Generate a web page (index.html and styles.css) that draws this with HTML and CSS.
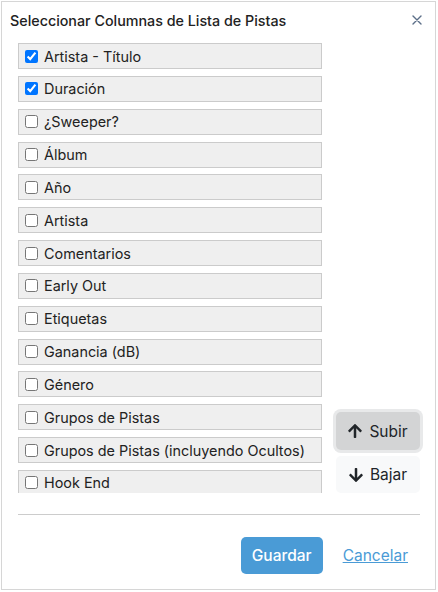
FILE: index.html
```html
<!DOCTYPE html>
<html lang="es">
<head>
<meta charset="utf-8">
<title>Seleccionar Columnas de Lista de Pistas</title>
<link rel="stylesheet" href="styles.css">
</head>
<body>
<div class="modal">
  <div class="modal-header">
    <h2 class="modal-title">Seleccionar Columnas de Lista de Pistas</h2>
    <button class="close" type="button" aria-label="Cerrar">
      <svg viewBox="0 0 10 10" width="10" height="10"><path d="M1 1L9 9M9 1L1 9" stroke="currentColor" stroke-width="1.4" stroke-linecap="round"/></svg>
    </button>
  </div>
  <div class="modal-body">
    <div class="picker">
      <ul class="col-list">
        <li class="col-item"><label><input type="checkbox" checked><span>Artista - Título</span></label></li>
        <li class="col-item"><label><input type="checkbox" checked><span>Duración</span></label></li>
        <li class="col-item"><label><input type="checkbox"><span>¿Sweeper?</span></label></li>
        <li class="col-item"><label><input type="checkbox"><span>Álbum</span></label></li>
        <li class="col-item"><label><input type="checkbox"><span>Año</span></label></li>
        <li class="col-item"><label><input type="checkbox"><span>Artista</span></label></li>
        <li class="col-item"><label><input type="checkbox"><span>Comentarios</span></label></li>
        <li class="col-item"><label><input type="checkbox"><span>Early Out</span></label></li>
        <li class="col-item"><label><input type="checkbox"><span>Etiquetas</span></label></li>
        <li class="col-item"><label><input type="checkbox"><span>Ganancia (dB)</span></label></li>
        <li class="col-item"><label><input type="checkbox"><span>Género</span></label></li>
        <li class="col-item"><label><input type="checkbox"><span>Grupos de Pistas</span></label></li>
        <li class="col-item"><label><input type="checkbox"><span>Grupos de Pistas (incluyendo Ocultos)</span></label></li>
        <li class="col-item"><label><input type="checkbox"><span>Hook End</span></label></li>
      </ul>
      <div class="move-btns">
        <button class="btn-move is-focused" type="button">
          <svg viewBox="0 32 448 448" width="14" height="14"><path d="M34.9 289.5l-22.2-22.2c-9.4-9.4-9.4-24.6 0-33.9L207 39c9.4-9.4 24.6-9.4 33.9 0l194.3 194.3c9.4 9.4 9.4 24.6 0 33.9L413 289.4c-9.5 9.5-25 9.3-34.3-.4L264 168.6V456c0 13.3-10.7 24-24 24h-32c-13.3 0-24-10.7-24-24V168.6L69.2 289.1c-9.3 9.8-24.8 10-34.3.4z" fill="currentColor"/></svg>
          <span>Subir</span>
        </button>
        <button class="btn-move" type="button">
          <svg viewBox="0 32 448 448" width="14" height="14"><path d="M413.1 222.5l22.2 22.2c9.4 9.4 9.4 24.6 0 33.9L241 473c-9.4 9.4-24.6 9.4-33.9 0L12.7 278.6c-9.4-9.4-9.4-24.6 0-33.9l22.2-22.2c9.5-9.5 25-9.3 34.3.4L184 343.4V56c0-13.3 10.7-24 24-24h32c13.3 0 24 10.7 24 24v287.4l114.8-120.5c9.3-9.8 24.8-10 34.3-.4z" fill="currentColor"/></svg>
          <span>Bajar</span>
        </button>
      </div>
    </div>
    <hr class="sep">
    <div class="modal-footer">
      <button class="btn-save" type="button">Guardar</button>
      <a class="cancel" href="#">Cancelar</a>
    </div>
  </div>
</div>
</body>
</html>
```

FILE: styles.css
```css
* { box-sizing: border-box; }

html, body {
  margin: 0;
  padding: 0;
  background: #ffffff;
}

body {
  font-family: Inter, "Noto Sans", "Liberation Sans", sans-serif;
  color: #212529;
  padding: 1px 0 0 1px;
}

.modal {
  width: 435px;
  height: 589px;
  border: 1px solid #d6d6d6;
  background: #ffffff;
  display: flex;
  flex-direction: column;
}

.modal-header {
  display: flex;
  align-items: flex-start;
  justify-content: space-between;
  padding: 10px 13px 0 8px;
}

.modal-title {
  margin: 0;
  font-size: 14.3px;
  line-height: 18px;
  font-weight: 500;
  color: #222;
}

.close {
  border: 0;
  background: transparent;
  padding: 0;
  margin-top: 3px;
  color: #5c6f88;
  width: 10px;
  height: 10px;
  display: flex;
}

.modal-body {
  padding: 13px 15px 0 16px;
  display: flex;
  flex-direction: column;
}

.picker {
  display: flex;
  align-items: flex-end;
  gap: 14px;
}

.col-list {
  list-style: none;
  margin: 0;
  padding: 0;
  width: 304px;
  height: 450px;
  overflow: hidden;
}

.col-item {
  height: 26px;
  margin-bottom: 6.85px;
  background: #efefef;
  border: 1px solid #cbcbcb;
}

.col-item label {
  display: flex;
  align-items: center;
  height: 100%;
  padding-left: 6px;
  gap: 6px;
  font-size: 14.4px;
  color: #222;
}

.col-item input {
  margin: 0;
  width: 13px;
  height: 13px;
}

.move-btns {
  display: flex;
  flex-direction: column;
  gap: 6px;
  width: 84px;
  flex: none;
}

.btn-move {
  height: 37px;
  border: 0;
  border-radius: 5px;
  background: #f8f9fa;
  color: #212529;
  font-family: inherit;
  font-size: 15.5px;
  display: flex;
  align-items: center;
  justify-content: center;
  gap: 7px;
  padding: 0;
}

.btn-move.is-focused {
  height: 38px;
  background: #d3d4d5;
  box-shadow: 0 0 0 3px #e8e9ea;
}

.btn-move svg { display: block; }

.sep {
  margin: 21px 0 0;
  border: 0;
  border-top: 1px solid #cccccc;
}

.modal-footer {
  display: flex;
  justify-content: flex-end;
  align-items: center;
  gap: 20px;
  padding: 22px 12px 0 0;
}

.btn-save {
  height: 37px;
  width: 82px;
  border: 0;
  border-radius: 5px;
  background: #4a9bd6;
  color: #ffffff;
  font-family: inherit;
  font-size: 15.5px;
  font-weight: 500;
  padding: 0;
}

.cancel {
  font-size: 15.5px;
  color: #4a9bd6;
  text-decoration: underline;
}
```
